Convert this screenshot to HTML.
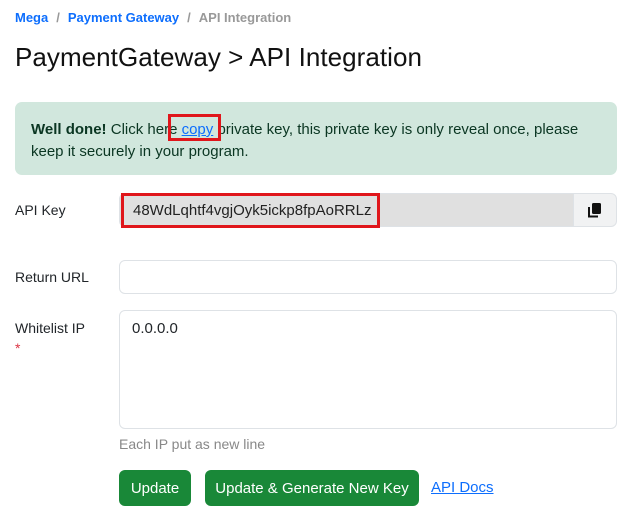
<!DOCTYPE html>
<html><head><style>
body{margin:0;width:637px;height:519px;background:#fff;font-family:"Liberation Sans",sans-serif;color:#212529;position:relative;overflow:hidden}
.a{position:absolute;white-space:nowrap}
.bc{top:10px;left:15px;font-size:13px;font-weight:bold;color:#999}
.bc b{color:#0d6efd}
.bc i{font-style:normal;margin:0 8px;color:#999}
h1{position:absolute;margin:0;top:42px;left:15px;font-size:26px;letter-spacing:0.05px;font-weight:normal;color:#111}
.alert{position:absolute;left:15px;top:102px;width:602px;height:73px;background:#d1e7dd;border-radius:7px;box-sizing:border-box;padding:17px 16px 0 16px;font-size:15px;line-height:22px;color:#0a3622}
.alert a{color:#0d6efd;text-decoration:underline}
.lbl{font-size:14px;left:15px}
.inp{position:absolute;left:119px;width:498px;border:1px solid #dee2e6;border-radius:6px;box-sizing:border-box;background:#fff}
.red{position:absolute;border:3px solid #e0161b;box-sizing:border-box}
.btn{position:absolute;top:470px;height:36px;background:#198838;color:#fff;border-radius:6px;font-size:15px;line-height:38px;text-align:center}
</style></head><body>
<div class="a bc"><b>Mega</b><i>/</i><b>Payment Gateway</b><i>/</i>API Integration</div>
<h1>PaymentGateway &gt; API Integration</h1>
<div class="alert"><b>Well done!</b> Click here <a>copy</a> private key, this private key is only reveal once, please keep it securely in your program.</div>
<div class="red" style="left:168px;top:114px;width:53px;height:27px"></div>
<div class="a lbl" style="top:202px">API Key</div>
<div class="inp" style="top:193px;height:34px;background:#e0e0e0;overflow:hidden">
 <div style="position:absolute;right:0;top:0;width:42px;height:34px;background:#f1f2f3;border-left:1px solid #dee2e6"></div>
 <svg style="position:absolute;right:14px;top:9px" width="14" height="15" viewBox="0 0 14 15"><rect x="4" y="0" width="9" height="11" rx="1.5" fill="#111"/><path d="M1 4v9.5h9" stroke="#111" stroke-width="2" fill="none"/></svg>
</div>
<div class="a" style="left:133px;top:202px;font-size:15px;color:#222">48WdLqhtf4vgjOyk5ickp8fpAoRRLz</div>
<div class="red" style="left:121px;top:193px;width:259px;height:35px"></div>
<div class="a lbl" style="top:269px">Return URL</div>
<div class="inp" style="top:260px;height:34px"></div>
<div class="a lbl" style="top:320px">Whitelist IP</div>
<div class="a" style="left:15px;top:340px;color:#dc3545;font-size:14px">*</div>
<div class="inp" style="top:310px;height:119px"></div>
<div class="a" style="left:132px;top:320px;font-size:15px">0.0.0.0</div>
<div class="a" style="left:119px;top:436px;font-size:14px;color:#888">Each IP put as new line</div>
<div class="btn" style="left:119px;width:72px">Update</div>
<div class="btn" style="left:205px;width:214px">Update &amp; Generate New Key</div>
<div class="a" style="left:431px;top:479px;font-size:15px;color:#0d6efd;text-decoration:underline">API Docs</div>
</body></html>
